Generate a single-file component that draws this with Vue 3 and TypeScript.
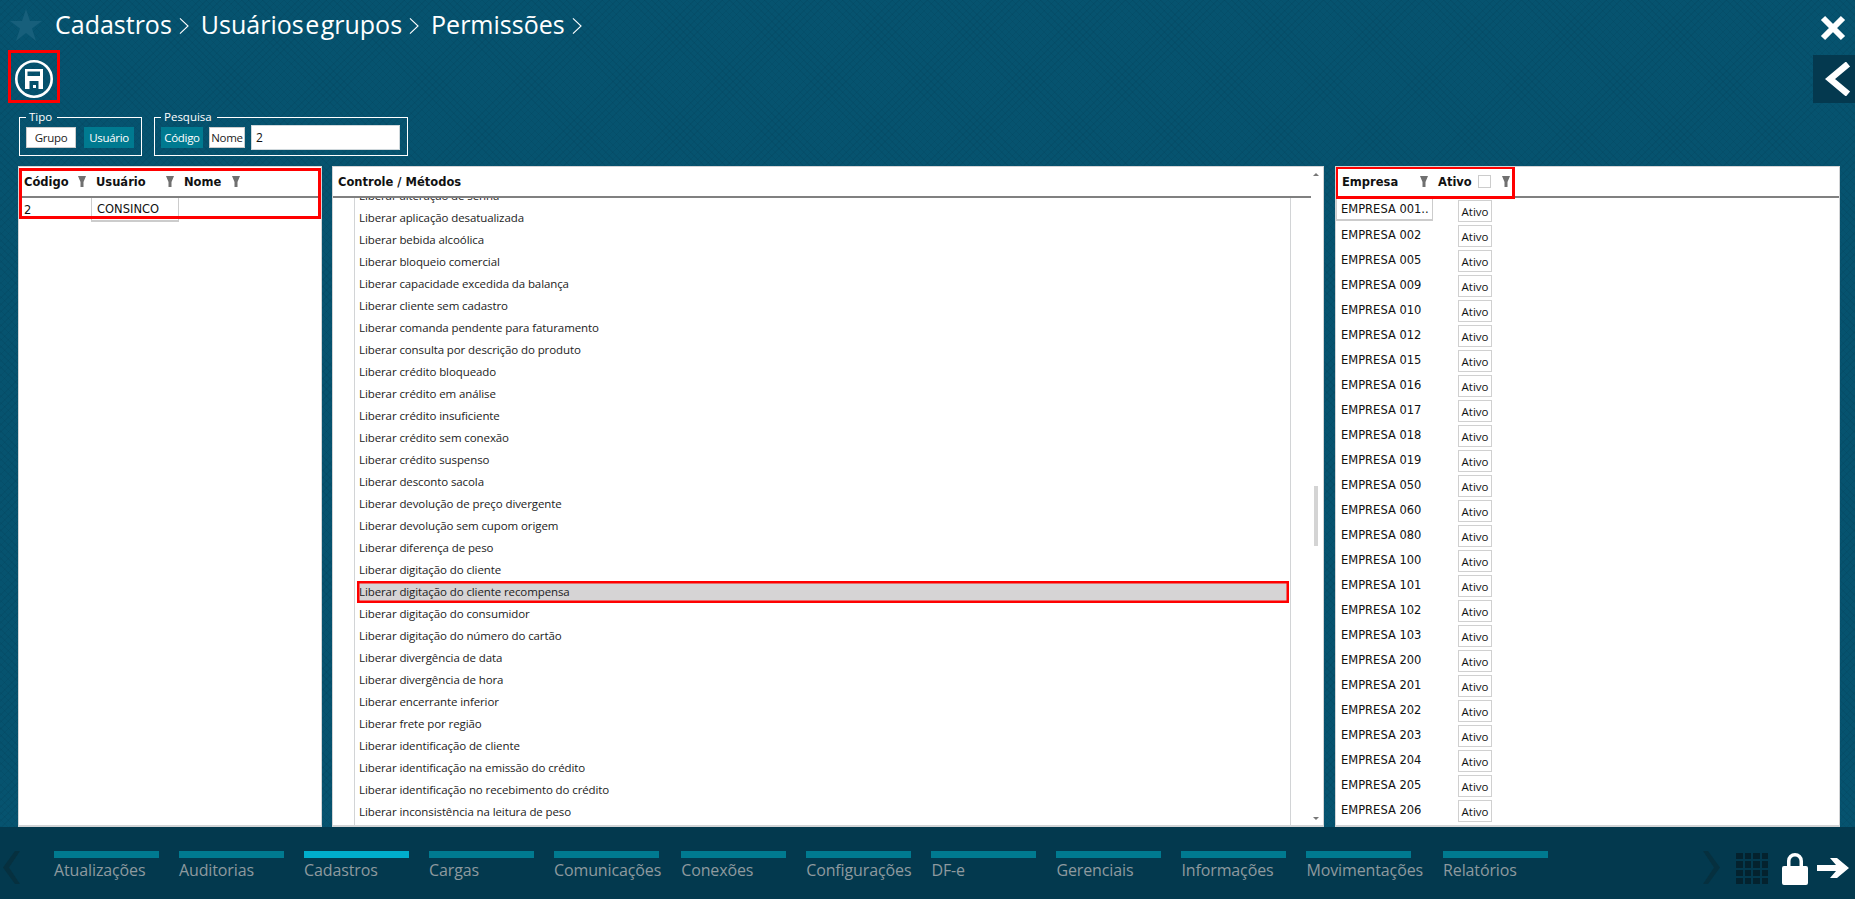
<template>
  <div class="screen">
    <div class="content">
      <header class="topbar">
        <svg class="star" viewBox="0 0 32 32"><polygon points="16,0 20,12 32,12 22,19.5 26,32 16,24 6,32 10,19.5 0,12 12,12" /></svg>
        <nav class="crumbs">
          <template v-for="c in crumbs" :key="c">
            <span>{{ c }}</span>
            <svg class="crumb-sep" viewBox="0 0 12 20"><path d="M1.5 1.5 L10.5 10 L1.5 18.5" /></svg>
          </template>
        </nav>
        <svg class="close" viewBox="0 0 26 26"><path d="M3 3 L23 23 M23 3 L3 23" /></svg>
      </header>

      <div class="toolbar">
        <button type="button" class="save">
          <svg viewBox="0 0 40 40" width="40" height="40">
            <circle cx="20" cy="20" r="17.700" fill="none" stroke="#fff" stroke-width="2.600" />
            <path fill="#fff" fill-rule="evenodd" d="M11 10 H29 V30 H24.500 V22 H15.500 V30 H11 Z M13.500 12.500 V17 H26 V12.500 Z" />
            <rect x="19" y="26" width="3" height="3" fill="#fff" />
          </svg>
          <span class="mark save-mark"></span>
        </button>
        <div class="back-tab">
          <svg viewBox="0 0 26 34" width="26" height="34"><path d="M23 2 L5 17 L23 32" /></svg>
        </div>
      </div>

      <div class="filters">
        <fieldset class="group tipo">
          <legend>Tipo</legend>
          <button type="button" class="opt grupo">Grupo</button>
          <button type="button" class="opt usuario on">Usuário</button>
        </fieldset>
        <fieldset class="group pesquisa">
          <legend>Pesquisa</legend>
          <button type="button" class="opt codigo on">Código</button>
          <button type="button" class="opt nome">Nome</button>
          <input class="search" type="text" v-model="search" />
        </fieldset>
      </div>

      <div class="panels">
        <section class="panel users">
          <div class="head users-head">
            <span class="hd col-cod">Código</span>
            <svg class="funnel" viewBox="0 0 8 11"><path d="M0 0 H8 L5.500 6 V11 H2.500 V6 Z" /></svg>
            <span class="hd col-usr">Usuário</span>
            <svg class="funnel" viewBox="0 0 8 11"><path d="M0 0 H8 L5.500 6 V11 H2.500 V6 Z" /></svg>
            <span class="hd col-nome">Nome</span>
            <svg class="funnel" viewBox="0 0 8 11"><path d="M0 0 H8 L5.500 6 V11 H2.500 V6 Z" /></svg>
          </div>
          <div class="user-row">
            <span class="user-code">2</span>
            <span class="user-name">CONSINCO</span>
          </div>
          <span class="mark users-mark"></span>
        </section>

        <section class="panel methods">
          <div class="methods-main">
            <div class="head"><span class="hd">Controle / Métodos</span></div>
            <div class="methods-body">
              <div class="gutter"></div>
              <ul class="method-list">
                <li v-for="m in methods" :key="m" :class="{ selected: m === selected }">Liberar {{ m }}</li>
              </ul>
            </div>
          </div>
          <div class="scrollbar">
            <i class="arrow up"></i>
            <i class="thumb"></i>
            <i class="arrow down"></i>
          </div>
        </section>

        <section class="panel companies">
          <div class="head companies-head">
            <span class="hd col-emp">Empresa</span>
            <svg class="funnel" viewBox="0 0 8 11"><path d="M0 0 H8 L5.500 6 V11 H2.500 V6 Z" /></svg>
            <span class="hd col-ativo">Ativo</span>
            <span class="check"></span>
            <svg class="funnel" viewBox="0 0 8 11"><path d="M0 0 H8 L5.500 6 V11 H2.500 V6 Z" /></svg>
          </div>
          <div v-for="(e, i) in companies" :key="e" class="company-row">
            <span class="company" :class="{ current: i === 0 }">{{ i === 0 ? 'EMPRESA 001..' : 'EMPRESA ' + e }}</span>
            <span class="ativo">Ativo</span>
          </div>
          <span class="mark companies-mark"></span>
        </section>
      </div>
    </div>

    <footer class="footer">
      <svg class="nav-arrow prev" viewBox="0 0 17 33"><path d="M12 0 H17 L6 16.500 L17 33 H12 L0 16.500 Z" /></svg>
      <div class="modules">
        <div v-for="m in modules" :key="m" class="module" :class="{ active: m === 'Cadastros' }">
          <i class="bar"></i>
          <span>{{ m }}</span>
        </div>
      </div>
      <svg class="nav-arrow next" viewBox="0 0 17 33"><path d="M5 0 H0 L11 16.500 L0 33 H5 L17 16.500 Z" /></svg>
      <div class="apps"><i v-for="n in 16" :key="n"></i></div>
      <svg class="lock" viewBox="0 0 26 33">
        <path fill="#fff" d="M2 14 H5 V9 A8 8 0 0 1 21 9 V14 H24 A2 2 0 0 1 26 16 V31 A2 2 0 0 1 24 33 H2 A2 2 0 0 1 0 31 V16 A2 2 0 0 1 2 14 Z M8.500 14 H17.500 V9 A4.500 4.500 0 0 0 8.500 9 Z" fill-rule="evenodd" />
      </svg>
      <svg class="exit" viewBox="0 0 32 24"><path d="M0 9 H19 L13 2 H20 L32 12 L20 22 H13 L19 15 H0 Z" /></svg>
    </footer>
  </div>
</template>

<script setup lang="ts">
import { ref } from 'vue'

const search = ref('2')
const crumbs = ['Cadastros', 'Usuários e grupos', 'Permissões']
const selected = 'digitação do cliente recompensa'

const methods = [
  'alteração de senha',
  'aplicação desatualizada',
  'bebida alcoólica',
  'bloqueio comercial',
  'capacidade excedida da balança',
  'cliente sem cadastro',
  'comanda pendente para faturamento',
  'consulta por descrição do produto',
  'crédito bloqueado',
  'crédito em análise',
  'crédito insuficiente',
  'crédito sem conexão',
  'crédito suspenso',
  'desconto sacola',
  'devolução de preço divergente',
  'devolução sem cupom origem',
  'diferença de peso',
  'digitação do cliente',
  'digitação do cliente recompensa',
  'digitação do consumidor',
  'digitação do número do cartão',
  'divergência de data',
  'divergência de hora',
  'encerrante inferior',
  'frete por região',
  'identificação de cliente',
  'identificação na emissão do crédito',
  'identificação no recebimento do crédito',
  'inconsistência na leitura de peso'
]

const companies = [
  '001', '002', '005', '009', '010', '012', '015', '016', '017', '018', '019', '050', '060',
  '080', '100', '101', '102', '103', '200', '201', '202', '203', '204', '205', '206'
]

const modules = [
  'Atualizações', 'Auditorias', 'Cadastros', 'Cargas', 'Comunicações', 'Conexões',
  'Configurações', 'DF-e', 'Gerenciais', 'Informações', 'Movimentações', 'Relatórios'
]
</script>

<style>
html,
body {
  margin: 0;
  overflow: hidden;
}
</style>

<style scoped>
.screen {
  width: 1855px;
  height: 899px;
  display: flex;
  flex-direction: column;
  font-family: "Open Sans", "Liberation Sans", sans-serif;
  color: #111;
}

.content {
  flex: 1;
  min-height: 0;
  display: flex;
  flex-direction: column;
  background-color: #06536f;
  background-image:
    repeating-linear-gradient(45deg, rgba(0, 40, 60, 0.09) 0 1px, transparent 1px 5px),
    repeating-linear-gradient(-45deg, rgba(0, 40, 60, 0.09) 0 1px, transparent 1px 5px);
}

/* cabecalho */
.topbar {
  height: 50px;
  display: flex;
  align-items: flex-start;
  padding: 9px 9px 0 10px;
  box-sizing: border-box;
}

.star {
  width: 32px;
  height: 32px;
  fill: #175f7b;
  flex: none;
}

.crumbs {
  display: flex;
  align-items: center;
  margin: -1px 0 0 13px;
  color: #fff;
  font-size: 25px;
  line-height: 32px;
  word-spacing: -5px;
}

.crumb-sep {
  width: 12px;
  height: 18px;
  margin: 4px 11px 0 6px;
  fill: none;
  stroke: #fff;
  stroke-width: 1.200;
}

.close {
  width: 26px;
  height: 26px;
  margin: 6px 0 0 auto;
  fill: none;
  stroke: #fff;
  stroke-width: 6;
}

.toolbar {
  height: 53px;
  display: flex;
  justify-content: space-between;
  align-items: flex-start;
  padding-left: 14px;
}

.save {
  position: relative;
  width: 40px;
  height: 53px;
  padding: 8px 0 0;
  border: 0;
  background: none;
}

.back-tab {
  width: 42px;
  height: 48px;
  margin-top: 5px;
  background: #04394f;
  display: flex;
  align-items: center;
  justify-content: flex-end;
  padding-right: 4px;
  box-sizing: border-box;
}

.back-tab path {
  fill: none;
  stroke: #fff;
  stroke-width: 6.500;
}

.mark {
  position: absolute;
  box-sizing: border-box;
  border: 3px solid #f00;
  pointer-events: none;
}

.save-mark {
  left: -6px;
  top: 0;
  width: 52px;
  height: 53px;
}

/* filtros */
.filters {
  height: 63px;
  display: flex;
  gap: 12px;
  padding: 8px 0 0 19px;
  box-sizing: border-box;
}

.group {
  margin: 0;
  height: 45px;
  padding: 0 6px 4px;
  border: 1px solid #fff;
  box-sizing: border-box;
  display: flex;
  align-items: center;
  gap: 8px;
}

.group legend {
  margin-left: 0;
  padding: 0 5px 0 3px;
  color: #fff;
  font-size: 11.500px;
  line-height: 12px;
}

.tipo {
  width: 123px;
}

.pesquisa {
  width: 254px;
  gap: 6px;
}

.opt {
  height: 21px;
  padding: 0;
  border: 1px solid #ccc;
  background: #fff;
  color: #222;
  font: 11.500px "Open Sans", sans-serif;
  letter-spacing: -0.300px;
}

.opt.on {
  background: #007a90;
  border-color: #007a90;
  color: #fff;
}

.grupo,
.usuario {
  width: 50px;
}

.codigo {
  width: 42px;
}

.nome {
  width: 36px;
}

.search {
  width: 149px;
  height: 25px;
  box-sizing: border-box;
  margin-left: 0;
  padding: 0 4px;
  border: 1px solid #cfd8dc;
  outline: none;
  font: 12px "Open Sans", sans-serif;
  color: #111;
}

/* paineis */
.panels {
  flex: 1;
  min-height: 0;
  display: flex;
  padding-left: 18px;
}

.panel {
  position: relative;
  box-sizing: border-box;
  background: #fff;
  border: 1px solid #d2d4d6;
  border-bottom-width: 2px;
  overflow: hidden;
}

.head {
  height: 31px;
  box-sizing: border-box;
  border-bottom: 2px solid #808080;
  display: flex;
  align-items: center;
  padding-left: 5px;
}

.hd {
  font: bold 11.500px "DejaVu Sans", sans-serif;
  color: #111;
}

.funnel {
  width: 8px;
  height: 11px;
  fill: #707070;
  flex: none;
}

.users {
  width: 304px;
}

.users-head .col-cod {
  width: 54px;
}

.users-head .col-usr {
  width: 70px;
  margin-left: 10px;
}

.users-head .col-nome {
  width: 48px;
  margin-left: 10px;
}

.user-row {
  height: 24px;
  display: flex;
  align-items: center;
  font: 11.500px "DejaVu Sans", sans-serif;
}

.user-code {
  width: 72px;
  padding-left: 5px;
  box-sizing: border-box;
}

.user-name {
  width: 88px;
  height: 24px;
  line-height: 22px;
  box-sizing: border-box;
  padding-left: 5px;
  border: 1px solid #ccc;
  border-top: 0;
  border-bottom-width: 2px;
}

.users-mark {
  left: 0;
  top: 1px;
  width: 302px;
  height: 51px;
}

.methods {
  width: 992px;
  margin-left: 10px;
  display: flex;
}

.methods-main {
  flex: 1;
  min-width: 0;
  display: flex;
  flex-direction: column;
}

.methods-body {
  flex: 1;
  min-height: 0;
  display: flex;
  padding-right: 20px;
  overflow: hidden;
}

.gutter {
  width: 21px;
  flex: none;
  border-right: 1px solid #d2d4d6;
}

.method-list {
  flex: 1;
  margin: -13px 0 0;
  padding: 0;
  list-style: none;
  border-right: 1px solid #d2d4d6;
  font-size: 11.500px;
  letter-spacing: -0.100px;
  color: #222;
}

.method-list li {
  height: 22px;
  line-height: 22px;
  padding-left: 4px;
  box-sizing: border-box;
}

.method-list li.selected {
  background: #d6d4d5;
  box-shadow: inset 0 0 0 2.500px #f00;
  margin: 0 1px 0 2px;
  padding-left: 2px;
}

.scrollbar {
  position: relative;
  width: 12px;
  flex: none;
}

.arrow {
  position: absolute;
  left: 2px;
  width: 0;
  height: 0;
  border-left: 3px solid transparent;
  border-right: 3px solid transparent;
}

.arrow.up {
  top: 6px;
  border-bottom: 3px solid #777;
}

.arrow.down {
  bottom: 5px;
  border-top: 3px solid #777;
}

.thumb {
  position: absolute;
  left: 3px;
  top: 319px;
  width: 4px;
  height: 60px;
  background: #d4d4d4;
}

.companies {
  width: 505px;
  margin-left: 11px;
}

.companies-head {
  padding-left: 6px;
}

.companies-head .col-emp {
  width: 78px;
}

.companies-head .col-ativo {
  width: 40px;
  margin-left: 10px;
}

.check {
  width: 13px;
  height: 13px;
  box-sizing: border-box;
  border: 1px solid #ccc;
  margin-right: 11px;
}

.company-row {
  height: 25px;
  display: flex;
  align-items: flex-start;
  font: 11.500px "DejaVu Sans", sans-serif;
}

.company {
  width: 97px;
  height: 23px;
  line-height: 22px;
  padding-left: 4px;
  box-sizing: border-box;
  border: 1px solid transparent;
  white-space: nowrap;
}

.company.current {
  border-color: #ccc;
  border-top: 0;
  border-bottom-width: 2px;
}

.ativo {
  margin: 2px 0 0 25px;
  width: 34px;
  height: 22px;
  box-sizing: border-box;
  text-align: center;
  border: 1px solid #d0d0d0;
  font: 11.500px/21px "Open Sans", sans-serif;
}

.companies-mark {
  left: -1px;
  top: -1px;
  width: 180px;
  height: 33px;
}

/* rodape */
.footer {
  height: 72px;
  flex: none;
  background: #03394e;
  display: flex;
  align-items: flex-start;
  padding-top: 24px;
  box-sizing: border-box;
}

.nav-arrow {
  width: 17px;
  height: 33px;
  fill: #06303f;
  flex: none;
}

.prev {
  margin-left: 3px;
}

.modules {
  display: flex;
  gap: 20px;
  margin-left: 34px;
  width: 1649px;
  flex: none;
}

.module {
  min-width: 105px;
  font-size: 16px;
  line-height: 22px;
  color: #8e9a9f;
  white-space: nowrap;
  letter-spacing: -0.120px;
}

.module .bar {
  display: block;
  width: 105px;
  height: 7px;
  margin-bottom: 1px;
  background: #007a90;
}

.module.active .bar {
  background: #00aecd;
}

.apps {
  width: 32px;
  height: 31px;
  margin: 2px 0 0 16px;
  display: grid;
  grid-template-columns: repeat(4, 1fr);
  gap: 2px;
  flex: none;
}

.apps i {
  background: #04222e;
}

.lock {
  width: 26px;
  height: 33px;
  margin: 1px 0 0 14px;
  flex: none;
}

.exit {
  width: 32px;
  height: 24px;
  margin: 5px 0 0 9px;
  fill: #fff;
  flex: none;
}
</style>
